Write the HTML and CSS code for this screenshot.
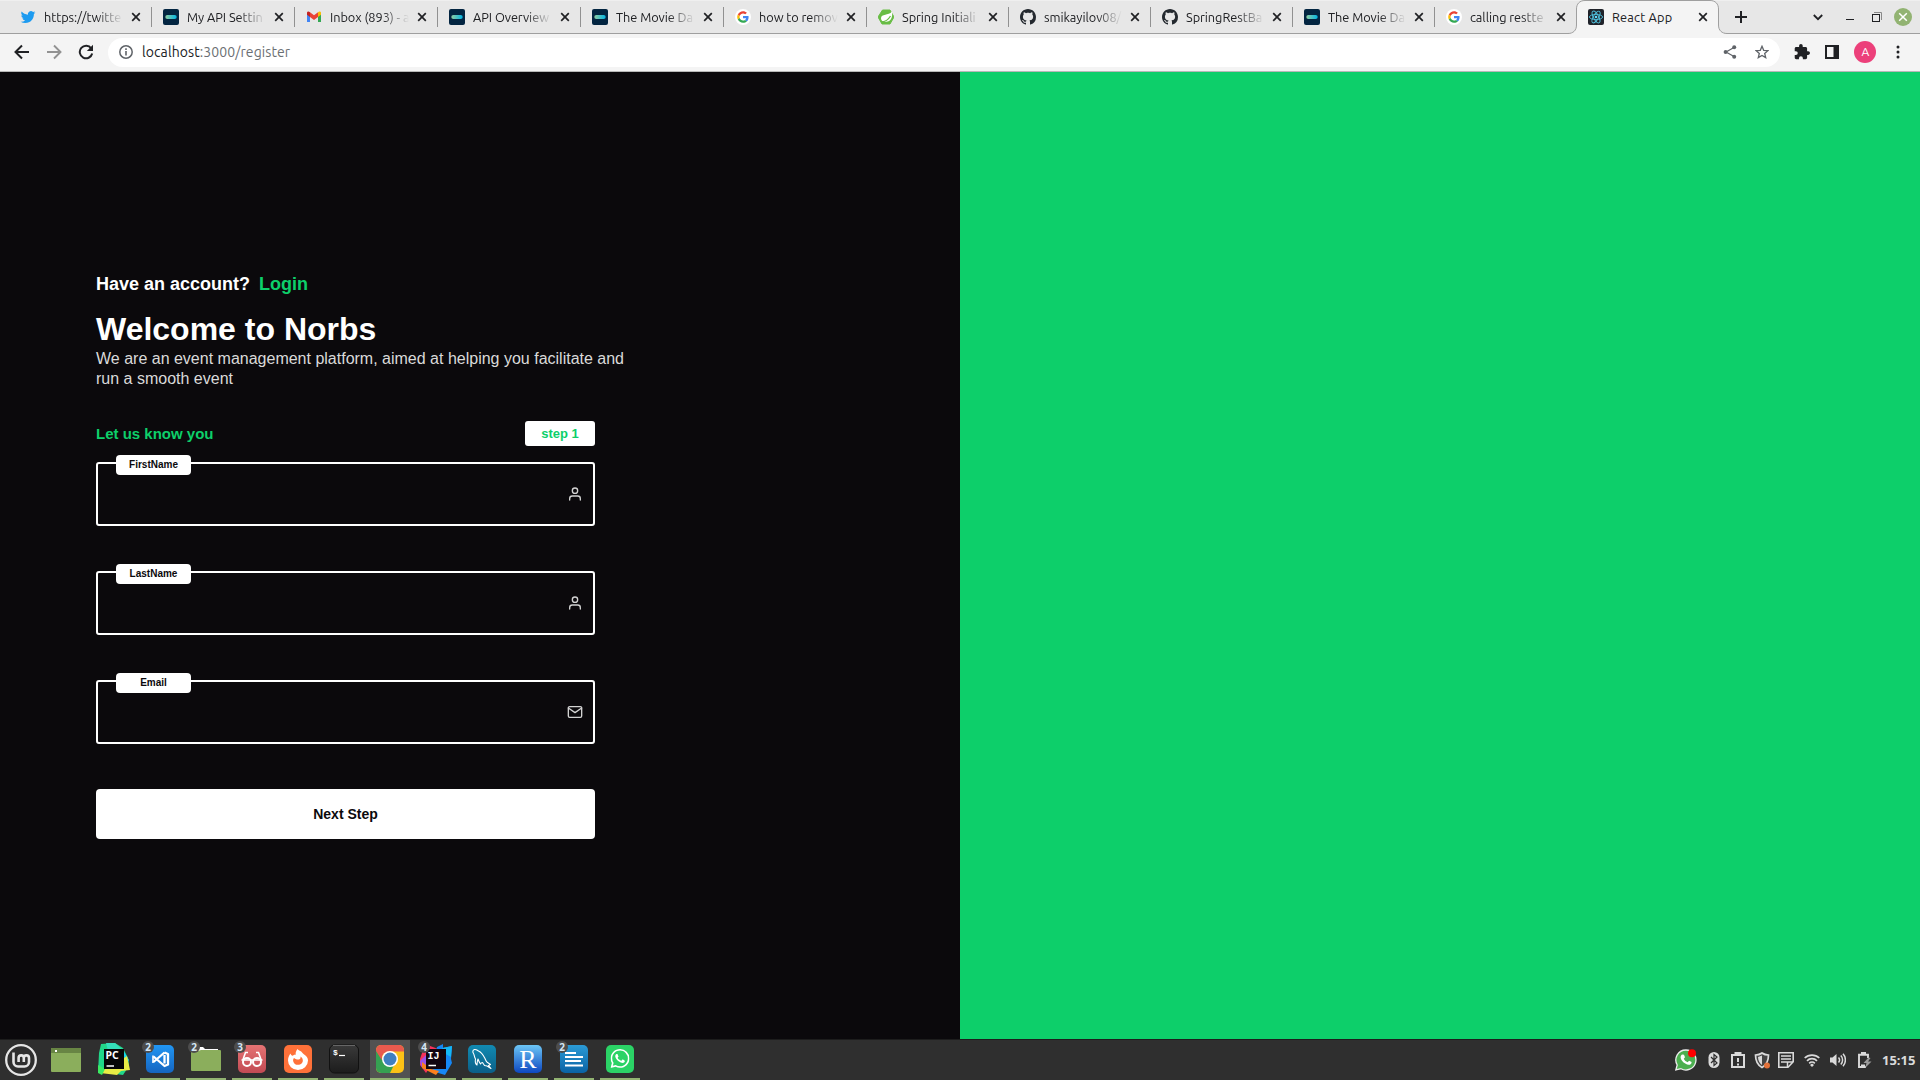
FILE: index.html
```html
<!DOCTYPE html>
<html lang="en">
<head>
<meta charset="utf-8">
<title>React App</title>
<link rel="stylesheet" href="styles.css">
</head>
<body>
<svg class="defs" width="0" height="0">
  <defs>
    <linearGradient id="g-tmdb" x1="0" x2="1"><stop offset="0" stop-color="#90cea1"/><stop offset="1" stop-color="#01b4e4"/></linearGradient>
    <linearGradient id="g-code" x1="0" y1="0" x2="0" y2="1"><stop offset="0" stop-color="#2196f3"/><stop offset="1" stop-color="#1565c0"/></linearGradient>
    <linearGradient id="g-red" x1="0" y1="0" x2="0" y2="1"><stop offset="0" stop-color="#e57373"/><stop offset="1" stop-color="#c24b54"/></linearGradient>
    <linearGradient id="g-term" x1="0" y1="0" x2="0" y2="1"><stop offset="0" stop-color="#3a3a3a"/><stop offset="1" stop-color="#1c1c1c"/></linearGradient>
    <linearGradient id="g-sql" x1="0" y1="0" x2="0" y2="1"><stop offset="0" stop-color="#118ab2"/><stop offset="1" stop-color="#0b5f88"/></linearGradient>
    <linearGradient id="g-r" x1="0" y1="0" x2="0" y2="1"><stop offset="0" stop-color="#6cc5f5"/><stop offset="1" stop-color="#0d47c1"/></linearGradient>
    <linearGradient id="g-doc" x1="0" y1="0" x2="0" y2="1"><stop offset="0" stop-color="#2b9bd6"/><stop offset="1" stop-color="#0a62a4"/></linearGradient>
    <clipPath id="c-round"><rect x="2" y="1" width="28" height="28" rx="5"/></clipPath>
  </defs>
  <symbol id="tmdb" viewBox="0 0 16 16"><rect width="16" height="16" rx="2" fill="#032541"/><rect x="2.3" y="6" width="11.4" height="4" rx="2" fill="url(#g-tmdb)"/></symbol>
  <symbol id="google" viewBox="0 0 16 16"><circle cx="8" cy="8" r="8" fill="#fff"/><g transform="translate(2.2 2.2) scale(.242)"><path fill="#EA4335" d="M24 9.5c3.5 0 6.700 1.200 9.200 3.600l6.900-6.900C35.900 2.400 30.500 0 24 0 14.600 0 6.500 5.400 2.600 13.200l8 6.200C12.400 13.700 17.700 9.500 24 9.500z"/><path fill="#4285F4" d="M47 24.600c0-1.600-.2-3.100-.4-4.600H24v9h12.900c-.6 3-2.200 5.500-4.800 7.200l7.700 6C44.400 38 47 31.800 47 24.600z"/><path fill="#FBBC05" d="M10.500 28.600c-.5-1.500-.8-3-.8-4.600s.3-3.100.8-4.600l-8-6.200C.9 16.500 0 20.100 0 24s.9 7.500 2.600 10.800z"/><path fill="#34A853" d="M24 48c6.500 0 11.900-2.100 15.900-5.800l-7.700-6c-2.200 1.500-4.900 2.300-8.200 2.300-6.300 0-11.600-4.200-13.500-9.900l-8 6.200C6.500 42.600 14.600 48 24 48z"/></g></symbol>
  <symbol id="github" viewBox="0 0 16 16"><path fill="#24292f" d="M8 0C3.580 0 0 3.580 0 8c0 3.540 2.290 6.530 5.470 7.590.4.070.55-.17.55-.38 0-.19-.01-.82-.01-1.490-2.010.37-2.530-.49-2.690-.94-.09-.23-.48-.94-.82-1.130-.28-.15-.68-.52-.01-.53.63-.01 1.080.58 1.230.82.72 1.210 1.870.87 2.330.66.07-.52.28-.87.510-1.070-1.780-.2-3.640-.89-3.640-3.950 0-.87.310-1.590.82-2.150-.08-.2-.36-1.020.08-2.120 0 0 .67-.21 2.200.82.640-.18 1.320-.27 2-.27s1.360.09 2 .27c1.530-1.040 2.200-.82 2.200-.82.440 1.100.160 1.920.080 2.120.510.56.820 1.270.820 2.150 0 3.070-1.870 3.750-3.650 3.950.290.25.540.73.540 1.480 0 1.070-.01 1.930-.01 2.200 0 .21.150.46.550.38A8.010 8.010 0 0 0 16 8c0-4.420-3.580-8-8-8z"/></symbol>
  <symbol id="x" viewBox="0 0 10 10"><path d="M1.200 1.200l7.600 7.600M8.800 1.200L1.200 8.800" stroke="#202124" stroke-width="1.700"/></symbol>
  <symbol id="user" viewBox="0 0 24 24"><g fill="none" stroke="#d2d2d2" stroke-width="2" stroke-linecap="round" stroke-linejoin="round"><path d="M20 21v-2a4 4 0 0 0-4-4H8a4 4 0 0 0-4 4v2"/><circle cx="12" cy="7" r="4"/></g></symbol>
  <symbol id="wa" viewBox="0 0 24 24"><path d="M17.472 14.382c-.297-.149-1.758-.867-2.030-.967-.273-.099-.471-.148-.67.150-.197.297-.767.966-.94 1.164-.173.199-.347.223-.644.075-.297-.15-1.255-.463-2.390-1.475-.883-.788-1.480-1.761-1.653-2.059-.173-.297-.018-.458.130-.606.134-.133.298-.347.446-.52.149-.174.198-.298.298-.497.099-.198.050-.371-.025-.52-.075-.149-.669-1.612-.916-2.207-.242-.579-.487-.5-.669-.51-.173-.008-.371-.01-.57-.01-.198 0-.52.074-.792.372-.272.297-1.040 1.016-1.040 2.479 0 1.462 1.065 2.875 1.213 3.074.149.198 2.096 3.200 5.077 4.487.709.306 1.262.489 1.694.625.712.227 1.360.195 1.871.118.571-.085 1.758-.719 2.006-1.413.248-.694.248-1.289.173-1.413-.074-.124-.272-.198-.57-.347m-5.421 7.403h-.004a9.870 9.870 0 0 1-5.031-1.378l-.361-.214-3.741.982.998-3.648-.235-.374a9.860 9.860 0 0 1-1.510-5.260c.001-5.450 4.436-9.884 9.888-9.884 2.640 0 5.122 1.030 6.988 2.898a9.825 9.825 0 0 1 2.893 6.994c-.003 5.450-4.437 9.884-9.885 9.884m8.413-18.297A11.815 11.815 0 0 0 12.050 0C5.495 0 .160 5.335.157 11.892c0 2.096.547 4.142 1.588 5.945L.057 24l6.305-1.654a11.882 11.882 0 0 0 5.683 1.448h.005c6.554 0 11.890-5.335 11.893-11.893a11.821 11.821 0 0 0-3.480-8.413z" fill="#fff"/></symbol>
</svg>

<header class="browser">
  <div class="tabstrip">
    <div class="tab first"><svg class="fav" viewBox="0 0 24 24"><path fill="#1d9bf0" transform="translate(1 1) scale(.92)" d="M23.953 4.570a10 10 0 0 1-2.825.775 4.958 4.958 0 0 0 2.163-2.723c-.951.555-2.005.959-3.127 1.184a4.920 4.920 0 0 0-8.384 4.482C7.690 8.095 4.067 6.130 1.640 3.162a4.822 4.822 0 0 0-.666 2.475c0 1.710.870 3.213 2.188 4.096a4.904 4.904 0 0 1-2.228-.616v.060a4.923 4.923 0 0 0 3.946 4.827 4.996 4.996 0 0 1-2.212.085 4.936 4.936 0 0 0 4.604 3.417 9.867 9.867 0 0 1-6.102 2.105c-.390 0-.779-.023-1.170-.067a13.995 13.995 0 0 0 7.557 2.209c9.053 0 13.998-7.496 13.998-13.985 0-.210 0-.420-.015-.630A9.935 9.935 0 0 0 24 4.590z"/></svg><span class="t">https://twitte</span><svg class="close"><use href="#x"/></svg></div>
    <div class="tab"><svg class="fav"><use href="#tmdb"/></svg><span class="t">My API Settin</span><svg class="close"><use href="#x"/></svg></div>
    <div class="tab"><svg class="fav" viewBox="0 0 16 16"><path fill="#4285f4" d="M1 3.500v9.500h3V7z"/><path fill="#34a853" d="M15 3.500v9.500h-3V7z"/><path fill="#fbbc04" d="M12 3.500V8l3-2.300V4c0-1.600-1.600-2-3-.8z"/><path fill="#c5221f" d="M4 3.500V8L1 5.700V4c0-1.600 1.600-2 3-.8z"/><path fill="#ea4335" d="M4 8V3.200l4 3 4-3V8l-4 3z"/></svg><span class="t">Inbox (893) - a</span><svg class="close"><use href="#x"/></svg></div>
    <div class="tab"><svg class="fav"><use href="#tmdb"/></svg><span class="t">API Overview</span><svg class="close"><use href="#x"/></svg></div>
    <div class="tab"><svg class="fav"><use href="#tmdb"/></svg><span class="t">The Movie Da</span><svg class="close"><use href="#x"/></svg></div>
    <div class="tab"><svg class="fav"><use href="#google"/></svg><span class="t">how to remov</span><svg class="close"><use href="#x"/></svg></div>
    <div class="tab narrow"><svg class="fav" viewBox="0 0 16 16"><path fill="#68bd45" d="M4.500 1h7.500L16 8l-4 7H4L0 8z" stroke="#68bd45" stroke-linejoin="round"/><path fill="#fff" d="M14 2.500c.8 6-1 10-6 10.300-3 .2-5-.8-5-3.500C3.200 4.500 10.500 7 14 2.500z"/><path d="M3 13c4-.2 7.500-2.500 9.500-6" stroke="#68bd45" fill="none" stroke-width="1.200"/></svg><span class="t">Spring Initiali</span><svg class="close"><use href="#x"/></svg></div>
    <div class="tab narrow"><svg class="fav"><use href="#github"/></svg><span class="t">smikayilov08/</span><svg class="close"><use href="#x"/></svg></div>
    <div class="tab narrow"><svg class="fav"><use href="#github"/></svg><span class="t">SpringRestBa</span><svg class="close"><use href="#x"/></svg></div>
    <div class="tab narrow"><svg class="fav"><use href="#tmdb"/></svg><span class="t">The Movie Da</span><svg class="close"><use href="#x"/></svg></div>
    <div class="tab narrow last"><svg class="fav"><use href="#google"/></svg><span class="t">calling restte</span><svg class="close"><use href="#x"/></svg></div>
    <div class="tab narrow active">
      <svg class="shape" viewBox="0 0 160 34"><path d="M0 34v-.5c5 0 8.500-3 8.500-8.500V9c0-5 3-8.500 8.500-8.500h125c5.500 0 8.500 3.500 8.500 8.500v16c0 5.500 3.500 8.500 8.500 8.500v.5z" fill="#f4f4f4"/><path d="M0 33.500c5 0 8.500-3 8.500-8.500V9c0-5 3-8.500 8.500-8.500h125c5.500 0 8.500 3.500 8.500 8.500v16c0 5.500 3.500 8.500 8.500 8.500" fill="none" stroke="#9f9f9f"/></svg>
      <svg class="fav" viewBox="0 0 16 16"><rect width="16" height="16" rx="2" fill="#20232a"/><g fill="none" stroke="#4fc0dc" stroke-width=".9"><ellipse cx="8" cy="8" rx="6.600" ry="2.600"/><ellipse cx="8" cy="8" rx="6.600" ry="2.600" transform="rotate(60 8 8)"/><ellipse cx="8" cy="8" rx="6.600" ry="2.600" transform="rotate(120 8 8)"/></g><circle cx="8" cy="8" r="1.300" fill="#61dafb"/></svg><span class="t whole">React App</span><svg class="close"><use href="#x"/></svg>
    </div>
    <svg class="plus" viewBox="0 0 12 12"><path d="M6 0v12M0 6h12" stroke="#202124" stroke-width="2"/></svg>
    <div class="window-buttons">
      <svg width="10" height="7" viewBox="0 0 10 7"><path d="M.8 1L5 5.200 9.200 1" fill="none" stroke="#202124" stroke-width="1.800"/></svg>
      <svg width="8" height="8" viewBox="0 0 8 8"><path d="M0 6.500h8" stroke="#202124"/></svg>
      <svg width="10" height="10" viewBox="0 0 10 10"><path d="M2 .5h7.500V8" fill="none" stroke="#888"/><rect x=".5" y="2.500" width="7" height="7" fill="none" stroke="#202124"/></svg>
      <svg width="18" height="18" viewBox="0 0 18 18"><circle cx="9" cy="9" r="9" fill="#92b372"/><path d="M5.200 5.200l7.600 7.600M12.800 5.200l-7.600 7.600" stroke="#fff" stroke-width="1.500"/></svg>
    </div>
  </div>
  <div class="toolbar">
    <div class="nav">
      <svg width="16" height="16" viewBox="0 0 16 16"><path d="M15 8H2M8 1.500L1.500 8 8 14.500" fill="none" stroke="#202124" stroke-width="2"/></svg>
      <svg width="16" height="16" viewBox="0 0 16 16"><path d="M1 8h13M8 1.500L14.500 8 8 14.500" fill="none" stroke="#929292" stroke-width="1.900"/></svg>
      <svg width="16" height="16" viewBox="0 0 16 16"><path d="M13.200 4.300A6.300 6.300 0 1 0 14.200 9.500" fill="none" stroke="#202124" stroke-width="2"/><path d="M15 .8V7H8.800z" fill="#202124"/></svg>
    </div>
    <div class="omnibox">
      <svg width="14" height="14" viewBox="0 0 14 14"><circle cx="7" cy="7" r="6.200" fill="none" stroke="#5f6368" stroke-width="1.500"/><path d="M7 6v4.500M7 3.300v1.600" stroke="#5f6368" stroke-width="1.600"/></svg>
      <span class="url"><b>localhost</b>:3000/register</span>
      <svg class="share" width="14" height="14" viewBox="0 0 14 14"><path d="M11 2.500L3 7l8 4.500" fill="none" stroke="#5f6368" stroke-width="1.200"/><g fill="#5f6368"><circle cx="11.200" cy="2.300" r="2"/><circle cx="2.600" cy="7" r="2"/><circle cx="11.200" cy="11.700" r="2"/></g></svg>
      <svg width="14" height="14" viewBox="0 0 14 14"><path d="M7 1.300l1.700 4 4.300.3-3.300 2.800 1 4.200L7 10.400l-3.700 2.200 1-4.200L1 5.600l4.300-.3z" fill="none" stroke="#5f6368" stroke-width="1.300"/></svg>
    </div>
    <div class="actions">
      <svg width="16" height="16" viewBox="1 1 22 22"><path fill="#202124" d="M20.500 11H19V7c0-1.100-.9-2-2-2h-4V3.500a2.500 2.500 0 0 0-5 0V5H4c-1.100 0-2 .9-2 2v3.800h1.500a2.700 2.700 0 0 1 0 5.400H2V20c0 1.100.9 2 2 2h3.800v-1.500a2.700 2.700 0 0 1 5.400 0V22H17c1.100 0 2-.9 2-2v-4h1.500a2.500 2.500 0 0 0 0-5z"/></svg>
      <svg width="14" height="14" viewBox="0 0 14 14"><rect x="1" y="1" width="12" height="12" fill="none" stroke="#202124" stroke-width="2"/><path d="M8.500 1H13v12H8.500z" fill="#202124"/></svg>
      <span class="avatar">A</span>
      <svg width="4" height="14" viewBox="0 0 4 14"><g fill="#202124"><circle cx="2" cy="2" r="1.500"/><circle cx="2" cy="7" r="1.500"/><circle cx="2" cy="12" r="1.500"/></g></svg>
    </div>
  </div>
</header>

<main class="page">
  <section class="form-side">
    <p class="have">Have an account? <a class="green login">Login</a></p>
    <h1>Welcome to Norbs</h1>
    <p class="intro">We are an event management platform, aimed at helping you facilitate and run a smooth event</p>
    <form>
      <div class="step-row"><span class="green know">Let us know you</span><span class="step">step 1</span></div>
      <div class="field"><label>FirstName</label><svg class="ic"><use href="#user"/></svg></div>
      <div class="field"><label>LastName</label><svg class="ic"><use href="#user"/></svg></div>
      <div class="field"><label>Email</label><svg class="ic" viewBox="0 0 24 24"><g fill="none" stroke="#d2d2d2" stroke-width="2" stroke-linecap="round" stroke-linejoin="round"><path d="M4 4h16c1.100 0 2 .9 2 2v12c0 1.100-.9 2-2 2H4c-1.100 0-2-.9-2-2V6c0-1.100.9-2 2-2z"/><path d="M22 6l-10 7L2 6"/></g></svg></div>
      <button type="button" class="next">Next Step</button>
    </form>
  </section>
  <section class="green-side"></section>
</main>

<footer class="taskbar">
  <div class="launchers">
    <svg width="32" height="32" viewBox="0 0 32 32"><circle cx="16" cy="16" r="14.800" fill="none" stroke="#e6e6e6" stroke-width="2.300"/><path d="M8.500 8.500v9.500a4.500 4.500 0 0 0 4.500 4.500h6.500a4.500 4.500 0 0 0 4.500-4.500v-4a2.600 2.600 0 0 0-5.200 0v4M18.800 18v-4a2.600 2.600 0 0 0-5.200 0v4" fill="none" stroke="#e6e6e6" stroke-width="2.600"/></svg>
    <svg width="32" height="32" viewBox="0 0 32 32"><rect x="1" y="4" width="30" height="24" rx="1" fill="#8bae5c"/><path d="M1 5a1 1 0 0 1 1-1h28a1 1 0 0 1 1 1v4H1z" fill="#688544"/><rect x="5" y="6" width="2" height="2" fill="#fff"/></svg>
    <svg width="32" height="32" viewBox="0 0 32 32"><path d="M3 1l14-1 8 5 5 10 1 8-6 9-14-2L0 30 1 10z" fill="#21d789"/><path d="M8 0l9 0 8 7-14 5z" fill="#35dfbb"/><path d="M25 7l6 10-3 6-4-3z" fill="#18d3ef"/><path d="M20 19l9-6 3 14-9 1-4 4-17-2 5-6z" fill="#e8ec45"/><path d="M0 22l7 4-3 6-4-2z" fill="#3bea62"/><rect x="6" y="6" width="20" height="20" fill="#070707"/><text x="7.500" y="15.500" font-size="10.500" class="ide">PC</text><path d="M8.500 23h7.500" stroke="#fff" stroke-width="1.500"/></svg>
  </div>
  <div class="apps">
    <div class="app"><i class="badge">2</i><svg viewBox="0 0 32 32"><rect x="2" y="1" width="28" height="28" rx="5" fill="url(#g-code)"/><path d="M20.500 8.500l3.500 1.500v10.500l-3.500 1.500-11-9.500M20.500 8.500l-11 9.500M20.500 11v8.500" fill="none" stroke="#fff" stroke-width="2.300" stroke-linejoin="round"/><path d="M9 11.500v7.500" stroke="#fff" stroke-width="1.600"/></svg></div>
    <div class="app"><i class="badge">2</i><svg viewBox="0 0 32 32"><path d="M4 3h9l2 2h13v4H4z" fill="#fff"/><path d="M1 8a1 1 0 0 1 1-1h6l3-1h19a1 1 0 0 1 1 1v19a1 1 0 0 1-1 1H2a1 1 0 0 1-1-1z" fill="#8bae5c"/></svg></div>
    <div class="app"><i class="badge">3</i><svg viewBox="0 0 32 32"><rect x="2" y="1" width="28" height="28" rx="5" fill="url(#g-red)"/><g fill="none" stroke="#fff" stroke-width="2"><circle cx="11" cy="18" r="4"/><circle cx="21" cy="18" r="4"/><path d="M5.500 16h21M7 15.500l2.500-7h2.500M25 15.500l-2.500-7H20" stroke-width="1.600"/></g></svg></div>
    <div class="app"><svg viewBox="0 0 32 32"><rect x="2" y="1" width="28" height="28" rx="5" fill="#ff7139"/><path fill-rule="evenodd" d="M15.500 5c1 1.500 3.500 1.500 5 4l1 1c3 2 4.600 4 4.500 6.500a10 9.500 0 0 1-20 0c0-3 1-5 2.500-7 .3 1.300 1 2 2.200 2.200 1-.8 2-1.200 3.300-1.200C13 9.500 14 7 15.500 5zM12 14c-.8 1-1 2-.8 3.200.6 2.500 2.300 3.600 4.800 3.600 3 0 5-2 4.800-4.600-.1-1.700-1-2.900-2.300-3.700.3 1.500-.3 2.500-1.500 3-1.500.4-3-.3-5-1.500z" fill="#fff"/></svg></div>
    <div class="app"><svg viewBox="0 0 32 32"><rect x="1.500" y="1" width="29" height="28" rx="5" fill="url(#g-term)" stroke="#111"/><path d="M5 1.500h22" stroke="#666"/><text x="5" y="11" class="mono" font-size="8">$</text><path d="M11 11.500h6" stroke="#fff" stroke-width="1.200"/></svg></div>
    <div class="app current"><svg viewBox="0 0 32 32"><g clip-path="url(#c-round)"><path d="M2 1h28v28H2z" fill="#fbc116"/><path d="M2 6l9 12 9 3-4 8H2z" fill="#36a152"/><path d="M2 1h28v6.500H16c-5 0-9 3-8 9L2 7z" fill="#e75a4e"/></g><circle cx="16" cy="15" r="8" fill="#fff"/><circle cx="16" cy="15" r="6.500" fill="#3f7fc1"/></svg></div>
    <div class="app"><i class="badge">4</i><svg viewBox="0 0 32 32"><path d="M5 0l13 5-4 12-8 12-6-8L0 15z" fill="#f5325b"/><path d="M0 17l9-9-4 18-4-4z" fill="#9b51e8"/><path d="M17 3l6-3 0 4 9-2-1 13 1 4-7 12-13-4z" fill="#1687f5"/><path d="M22 4l10-2-1 11-7-4z" fill="#13b7f7"/><path d="M2 18l9 7 8 2-3 4-14-7z" fill="#fc801d"/><rect x="6" y="5" width="20" height="20" fill="#120510"/><text x="7.500" y="15" font-size="10" class="mono">IJ</text><path d="M8.500 21.500h7.500" stroke="#fff" stroke-width="1.500"/></svg></div>
    <div class="app"><svg viewBox="0 0 32 32"><rect x="2" y="1" width="28" height="28" rx="5" fill="url(#g-sql)"/><path d="M11 21c-1.500-1-2-3.500-1.500-6C8 12.500 8.500 11 7.500 9.500 6.500 8 6.500 6 8.500 5.500c2-.3 3 1 4 1.500 3.500 1.500 5 4.500 6.500 7.500 1 2 1 3 2.500 4l3 2-2 1 2.500 3-4-2.500-2.500-.5-2-3c-1 0-1.500.5-2 1.500-1.500-2-2-3.500-2.500-5-.8 1.500-.8 3.500-1 6z" fill="none" stroke="#fff" stroke-width="1.100" stroke-linejoin="round"/></svg></div>
    <div class="app"><svg viewBox="0 0 32 32"><rect x="2" y="1" width="28" height="28" rx="5" fill="url(#g-r)"/><text x="16" y="24" text-anchor="middle" class="serif" font-size="26">R</text></svg></div>
    <div class="app"><i class="badge">2</i><svg viewBox="0 0 32 32"><rect x="2" y="1" width="28" height="28" rx="5" fill="url(#g-doc)"/><path d="M7 9h11M7 13h18M7 17h16M7 21.500h18" stroke="#fff" stroke-width="2"/></svg></div>
    <div class="app"><svg viewBox="0 0 32 32"><rect x="2" y="1" width="28" height="28" rx="5" fill="#2bd366"/><use href="#wa" x="6.500" y="5" width="19" height="19"/></svg></div>
  </div>
  <div class="tray">
    <svg width="22" height="22" viewBox="0 0 22 22"><path d="M11 1a10 10 0 1 1-5 18.700L.8 21l1.400-5A10 10 0 0 1 11 1z" fill="#4caf50" stroke="#eee" stroke-width="1.300"/><path d="M7 5.500l2 .2 1 2.600-1.200 1.400c.9 1.800 2 2.700 3.800 3.500l1.500-1.400 2.500 1.200c.1 2-1.500 3-3 2.800-4-.6-7.500-4-8-7.300 0-1.500.6-2.500 1.400-3z" fill="#fff"/><circle cx="17" cy="4.200" r="4" fill="red"/></svg>
    <svg width="16" height="16" viewBox="0 0 16 16"><rect x="2.500" y="0" width="11" height="16" rx="5.500" fill="#dadada"/><path d="M5 5l6 6-3 2.500v-11L11 5l-6 6" fill="none" stroke="#2f2f2f" stroke-width="1.200"/></svg>
    <svg width="16" height="16" viewBox="0 0 16 16"><path d="M2 3h12v12H2z" fill="none" stroke="#dadada" stroke-width="2"/><path d="M4.500 0h7v4h-7z" fill="#dadada"/><path d="M8 6v4M8 11.500v2" stroke="#dadada" stroke-width="2"/></svg>
    <svg width="17" height="17" viewBox="0 0 17 17"><path d="M8 1c2 1.500 4 2 6.500 2 0 6-2 10-6.500 12.500C3.500 13 1.500 9 1.500 3 4 3 6 2.500 8 1z" fill="#444" stroke="#dadada" stroke-width="1.700"/><path d="M8 3.500v9.500c-2-1.500-4-4-4-8z" fill="#dadada"/><circle cx="13" cy="13.500" r="3" fill="#e2713a"/></svg>
    <svg width="16" height="16" viewBox="0 0 16 16"><path d="M.8.800h14.400v9L10 15.200H.8z" fill="none" stroke="#dadada" stroke-width="1.600"/><path d="M3 4h10M3 7h10M3 10h6M9.500 15V10H15" fill="none" stroke="#dadada" stroke-width="1.500"/></svg>
    <svg width="16" height="16" viewBox="0 0 16 16"><path d="M.7 6a10.500 10.500 0 0 1 14.600 0M3 8.800a7 7 0 0 1 10 0M5.200 11.300a4 4 0 0 1 5.600 0" fill="none" stroke="#dadada" stroke-width="1.700"/><path d="M8 11.500l2 1.500-2 2-2-2z" fill="#dadada"/></svg>
    <svg width="16" height="16" viewBox="0 0 16 16"><path d="M0 5.500h2.500L6.500 2v12l-4-3.500H0z" fill="#dadada"/><path d="M8.500 5.500c1.300 1.500 1.300 3.500 0 5M10.800 3.500c2.400 2.500 2.400 6.500 0 9M13 1.800c3.200 3.500 3.200 9 0 12.400" fill="none" stroke="#dadada" stroke-width="1.500"/></svg>
    <svg width="16" height="16" viewBox="0 0 16 16"><path d="M12 6V2.800H3V15h7" fill="none" stroke="#dadada" stroke-width="1.900"/><path d="M5 0h5v3H5zM5 12.500h4V14H5z" fill="#dadada"/><path d="M12.500 5.500l-5 5.500h3l-1.500 5 6.500-6.500H12L14.500 6z" fill="#9a9a9a"/></svg>
    <span class="clock">15:15</span>
  </div>
</footer>
</body>
</html>
```
FILE: styles.css
```css
* { box-sizing: border-box; }
body {
  margin: 0;
  width: 1920px;
  height: 1080px;
  overflow: hidden;
  display: flex;
  flex-direction: column;
  font-family: "Liberation Sans", Arial, sans-serif;
}
svg { display: block; flex: none; }
.defs { position: absolute; }
p, h1 { margin: 0; }

/* Browser chrome */
.browser { height: 72px; font-family: Ubuntu, "Noto Sans", sans-serif; }
.tabstrip {
  height: 34px;
  display: flex;
  align-items: center;
  padding: 0 0 1px 8px;
  background: #e7e7e7;
  border-top: 1px solid #efefef;
  box-shadow: inset 0 -1px #9f9f9f;
}
.tab {
  width: 143px;
  height: 20px;
  display: flex;
  align-items: center;
  padding: 0 10px 0 11px;
  border-right: 1px solid #919191;
  position: relative;
}
.tab.first { width: 144px; padding-left: 12px; }
.tab.narrow { width: 142px; }
.tab.last { border-color: transparent; }
.tab.active { border: 0; padding-right: 11px; }
.fav { width: 16px; height: 16px; position: relative; }
.t {
  flex: 1;
  width: 0;
  margin: 0 8px;
  white-space: nowrap;
  font-size: 12.75px;
  line-height: 20px;
  letter-spacing: -0.05px;
  color: #202124;
  -webkit-mask-image: linear-gradient(90deg, #000 66%, transparent);
  mask-image: linear-gradient(90deg, #000 66%, transparent);
}
.t.whole { -webkit-mask-image: none; mask-image: none; position: relative; letter-spacing: 0.2px; }
.close { width: 10px; height: 10px; position: relative; }
.shape { position: absolute; left: -9px; top: -7px; width: 160px; height: 34px; }
.plus { width: 12px; height: 12px; margin-left: 16px; }
.window-buttons { margin-left: auto; display: flex; align-items: center; gap: 13px; padding-right: 8px; }
.window-buttons svg:first-child { margin-right: 10px; }
.window-buttons svg:nth-child(2) { margin-right: 5px; }
.window-buttons svg:nth-child(3) { margin-right: -1px; }

.toolbar {
  height: 38px;
  display: flex;
  align-items: center;
  background: #f4f4f4;
  border-bottom: 1px solid #b8b8b8;
  padding: 0 20px 1px 14px;
}
.nav { display: flex; gap: 16px; width: 94px; }
.omnibox {
  width: 1672px;
  height: 29px;
  border-radius: 15px;
  background: #fff;
  display: flex;
  align-items: center;
  padding: 0 11px;
}
.url { margin-left: 9px; font-size: 14px; letter-spacing: 0.09px; color: #6b6f73; }
.url b { font-weight: 400; color: #202124; }
.share { margin: 0 18px 0 auto; }
.actions { flex: 1; display: flex; align-items: center; justify-content: space-between; padding-left: 14px; }
.avatar {
  width: 22px;
  height: 22px;
  margin: 0 5px 0 1px;
  border-radius: 50%;
  background: #ec407a;
  color: #fff;
  font-size: 12px;
  line-height: 22px;
  text-align: center;
}

/* Page */
.page { flex: 1; display: flex; }
.form-side { width: 960px; background: #0b090c; padding: 201px 0 0 96px; }
.green-side { flex: 1; background: #0dcf6a; }
.green { color: #0dcf6a; }
.have { font-size: 18px; line-height: 22px; font-weight: 700; color: #fff; }
.login { margin-left: 4px; }
h1 { margin-top: 16px; font-size: 32px; line-height: 36px; color: #fff; }
.intro { width: 540px; font-size: 16px; line-height: 20px; color: #dadada; margin-top: 2px; }
form { width: 499px; margin-top: 32px; display: flex; flex-direction: column; }
.step-row { display: flex; justify-content: space-between; align-items: center; margin-bottom: 16px; }
.know { font-size: 15px; font-weight: 700; }
.step {
  width: 70px;
  height: 25px;
  border-radius: 3px;
  background: #fff;
  color: #0dcf6a;
  font-size: 13px;
  font-weight: 700;
  line-height: 25px;
  text-align: center;
}
.field {
  height: 64px;
  border: 2px solid #fff;
  border-radius: 3px;
  margin-bottom: 45px;
  display: flex;
  align-items: center;
  justify-content: flex-end;
  padding-right: 10px;
  position: relative;
}
.field label {
  position: absolute;
  left: 18px;
  top: -9px;
  width: 75px;
  height: 20px;
  border-radius: 4px;
  background: #fff;
  color: #0b090c;
  font-size: 10px;
  font-weight: 700;
  line-height: 19px;
  text-align: center;
}
.ic { width: 16px; height: 16px; }
.next {
  height: 50px;
  border: 0;
  border-radius: 4px;
  background: #fff;
  color: #0b090c;
  font: 700 14px "Liberation Sans", Arial, sans-serif;
}

/* Taskbar */
.taskbar {
  height: 41px;
  display: flex;
  background: #2f2f2f;
  border-top: 1px solid #1d1d1d;
}
.launchers { width: 140px; display: flex; align-items: center; padding-left: 5px; gap: 13px; }
.launchers svg:last-child { margin-left: 3px; margin-top: -3px; }
.apps { display: flex; gap: 6px; }
.app {
  width: 40px;
  position: relative;
  padding: 4px 4px 0;
  border-bottom: 2px solid #92b372;
}
.app svg { width: 32px; height: 32px; }
.app.current { background: #525252; }
.badge {
  position: absolute;
  left: 2px;
  top: 1px;
  width: 12px;
  height: 12px;
  border-radius: 50%;
  background: #4d4d4d;
  color: #d5e6f5;
  font: 700 10px/12px "Noto Sans", sans-serif;
  text-align: center;
}
.ide { font-family: "Noto Sans", sans-serif; font-weight: 700; fill: #fff; }
.mono { font-family: "Liberation Mono", monospace; font-weight: 700; fill: #fff; }
.serif { font-family: "Liberation Serif", serif; fill: #fff; }
.tray { margin-left: auto; display: flex; align-items: center; gap: 8px; padding-right: 5px; }
.tray svg:first-child { margin-right: 1px; }
.tray svg:nth-child(4) { margin-right: -1px; }
.tray svg:nth-child(5), .tray svg:nth-child(6), .tray svg:nth-child(7) { margin-right: 2px; }
.clock {
  width: 33px;
  margin-left: 2px;
  font: 700 13px/20px "Noto Sans", sans-serif;
  color: #dadada;
}
```
